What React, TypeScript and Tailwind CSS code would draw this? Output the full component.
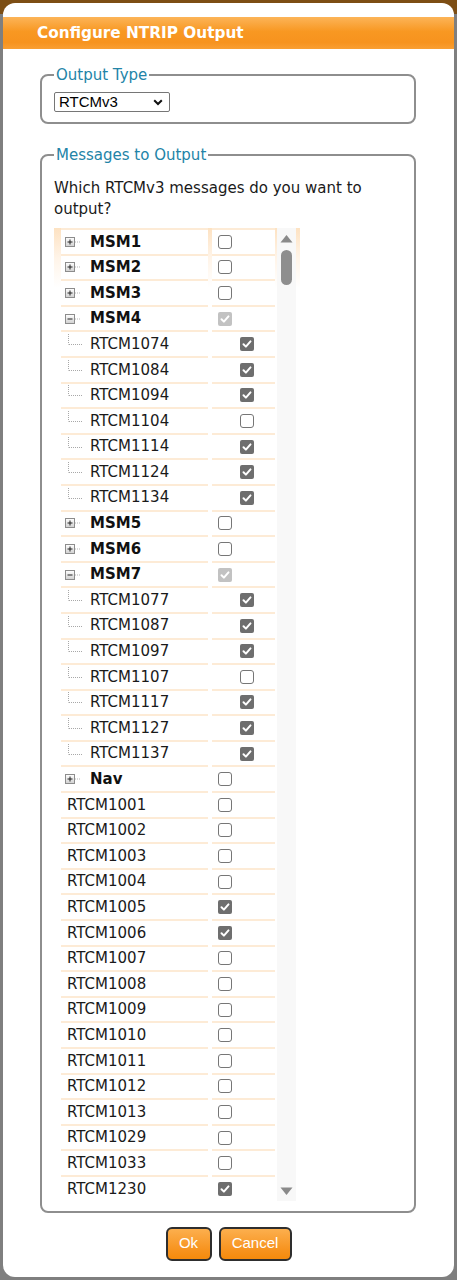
import React from "react";

type Row =
  | { kind: "group"; label: string; expanded: boolean; state: "off" | "on" | "dis" }
  | { kind: "child"; label: string; state: "off" | "on" }
  | { kind: "top"; label: string; state: "off" | "on" };

const rows: Row[] = [];
const grp = (label: string, expanded: boolean, state: "off" | "on" | "dis") =>
  rows.push({ kind: "group", label, expanded, state });
const kids = (ids: [string, boolean][]) =>
  ids.forEach(([l, c]) => rows.push({ kind: "child", label: l, state: c ? "on" : "off" }));

grp("MSM1", false, "off");
grp("MSM2", false, "off");
grp("MSM3", false, "off");
grp("MSM4", true, "dis");
kids([
  ["RTCM1074", true],
  ["RTCM1084", true],
  ["RTCM1094", true],
  ["RTCM1104", false],
  ["RTCM1114", true],
  ["RTCM1124", true],
  ["RTCM1134", true],
]);
grp("MSM5", false, "off");
grp("MSM6", false, "off");
grp("MSM7", true, "dis");
kids([
  ["RTCM1077", true],
  ["RTCM1087", true],
  ["RTCM1097", true],
  ["RTCM1107", false],
  ["RTCM1117", true],
  ["RTCM1127", true],
  ["RTCM1137", true],
]);
grp("Nav", false, "off");
[
  ["RTCM1001", false],
  ["RTCM1002", false],
  ["RTCM1003", false],
  ["RTCM1004", false],
  ["RTCM1005", true],
  ["RTCM1006", true],
  ["RTCM1007", false],
  ["RTCM1008", false],
  ["RTCM1009", false],
  ["RTCM1010", false],
  ["RTCM1011", false],
  ["RTCM1012", false],
  ["RTCM1013", false],
  ["RTCM1029", false],
  ["RTCM1033", false],
  ["RTCM1230", true],
].forEach(([l, c]) => rows.push({ kind: "top", label: l as string, state: c ? "on" : "off" }));

function Check({ state }: { state: "off" | "on" | "dis" }) {
  if (state === "off") {
    return <span className="block w-[14px] h-[14px] rounded-[3px] border border-[#767676] bg-white" />;
  }
  return (
    <span
      className={
        "flex items-center justify-center w-[14px] h-[14px] rounded-[2px] " +
        (state === "on" ? "bg-[#6e6e6e]" : "bg-[#c2c2c2]")
      }
    >
      <svg width="12" height="12" viewBox="0 0 12 12">
        <path d="M2.5 6.3 L4.9 8.6 L9.5 3.4" fill="none" stroke="#fff" strokeWidth="2" strokeLinecap="round" strokeLinejoin="round" />
      </svg>
    </span>
  );
}

function Expander({ expanded }: { expanded: boolean }) {
  return (
    <span className="flex items-center">
      <svg width="15" height="10" viewBox="0 0 15 10">
        <defs>
          <linearGradient id="eg" x1="0" y1="0" x2="0" y2="1">
            <stop offset="0" stopColor="#ffffff" />
            <stop offset="1" stopColor="#d0d0d0" />
          </linearGradient>
        </defs>
        <rect x="0.5" y="0.5" width="9" height="9" fill="url(#eg)" stroke="#8c8c8c" />
        <line x1="2.5" y1="5" x2="7.5" y2="5" stroke="#222" />
        {!expanded && <line x1="5" y1="2.5" x2="5" y2="7.5" stroke="#222" />}
        <line x1="10" y1="5" x2="15" y2="5" stroke="#b5b5b5" strokeDasharray="1 1" />
      </svg>
    </span>
  );
}

function Connector() {
  return (
    <svg width="22" height="22" viewBox="0 0 22 22" className="shrink-0">
      <line x1="7.5" y1="1" x2="7.5" y2="11.5" stroke="#a8a8a8" strokeDasharray="1 1" />
      <line x1="8" y1="11.5" x2="21" y2="11.5" stroke="#a8a8a8" strokeDasharray="1 1" />
    </svg>
  );
}

function TreeRow({ row }: { row: Row }) {
  const cell = "bg-white border-t-2 border-[#fdebd6] flex items-center h-[25.6px]";
  return (
    <div className="grid grid-cols-[147px_63px] gap-x-[4px]">
      <div className={cell}>
        {row.kind === "group" && (
          <div className="flex items-center pl-[4px]">
            <Expander expanded={row.expanded} />
            <span className="ml-[10px] font-bold text-[15px] text-[#111]">{row.label}</span>
          </div>
        )}
        {row.kind === "child" && (
          <div className="flex items-center">
            <Connector />
            <span className="ml-[7px] text-[15px] text-[#1a1a1a]">{row.label}</span>
          </div>
        )}
        {row.kind === "top" && <span className="pl-[6px] text-[15px] text-[#1a1a1a]">{row.label}</span>}
      </div>
      <div className={cell + (row.kind === "child" ? " pl-[28px]" : " pl-[6px]")}>
        <Check state={row.state} />
      </div>
    </div>
  );
}

export default function App() {
  return (
    <div
      className="w-[457px] h-[1280px] pt-[3px] pl-[3px] bg-[linear-gradient(to_bottom,#7d4e14_0px,#7d4e14_14px,#7f7f7f_14px)]"
      style={{ fontFamily: '"DejaVu Sans", Verdana, sans-serif' }}
    >
      <div className="w-[451px] h-[1274px] bg-white rounded-[12px] pt-[14px] pb-[16px] flex flex-col">
        <div className="h-[32px] flex items-center pl-[34px] bg-[linear-gradient(to_bottom,#fcb458_0%,#f89822_45%,#f7931e_80%,#f99f33_100%)]">
          <span className="text-white font-bold text-[15.3px]">Configure NTRIP Output</span>
        </div>

        <fieldset className="mt-[17px] ml-[37px] mr-[38px] border-2 border-[#8e8e8e] rounded-[8px] px-[12px] pt-[8px] pb-[10px]">
          <legend className="px-[2px] text-[15px] leading-[18px] text-[#2384a7]">Output Type</legend>
          <div className="relative w-[116px] h-[20px] border border-[#767676] rounded-[2px] bg-white flex items-center">
            <span className="pl-[4px] text-[15px] text-black" style={{ fontFamily: '"Liberation Sans", Arial, sans-serif' }}>
              RTCMv3
            </span>
            <svg className="absolute right-[6px] top-[6px]" width="10" height="7" viewBox="0 0 10 7">
              <path d="M1.2 1.2 L5 5 L8.8 1.2" fill="none" stroke="#111" strokeWidth="2" />
            </svg>
          </div>
        </fieldset>

        <fieldset className="mt-[22px] ml-[37px] mr-[38px] border-2 border-[#8e8e8e] rounded-[8px] px-[12px] pt-[14px] pb-[10px]">
          <legend className="px-[2px] text-[15px] leading-[18px] text-[#2384a7]">Messages to Output</legend>
          <p className="text-[15px] leading-[21px] text-[#1a1a1a]">Which RTCMv3 messages do you want to output?</p>
          <div className="mt-[8px] w-[246px] flex pl-[7px] pr-[4px] bg-[linear-gradient(to_bottom,#fde2c2_0px,#fff4e8_30px,#ffffff_60px)]">
            <div className="w-[214px] flex flex-col">
              {rows.map((r, i) => (
                <TreeRow key={i} row={r} />
              ))}
            </div>
            <div className="ml-[2px] w-[19px] bg-[#f8f8f8] flex flex-col items-center justify-between pt-[6px] pb-[5px]">
              <div className="flex flex-col items-center">
                <svg width="13" height="9" viewBox="0 0 13 9">
                  <path d="M0.5 8.5 L6.5 1 L12.5 8.5 Z" fill="#8a8a8a" />
                </svg>
                <div className="mt-[7px] w-[11px] h-[35px] rounded-full bg-[#8e8e8e]" />
              </div>
              <svg width="13" height="9" viewBox="0 0 13 9">
                <path d="M0.5 0.5 L6.5 8 L12.5 0.5 Z" fill="#8a8a8a" />
              </svg>
            </div>
          </div>
        </fieldset>

        <div className="mt-[14px] flex justify-center gap-[7px]" style={{ fontFamily: '"Liberation Sans", Arial, sans-serif' }}>
          <button className="w-[46px] h-[34px] rounded-[6px] border-2 border-[#2e2e2e] text-white text-[15px] bg-[linear-gradient(to_bottom,#fcaf4e,#f7931e_70%,#f58a0c)]">
            Ok
          </button>
          <button className="w-[73px] h-[34px] rounded-[6px] border-2 border-[#2e2e2e] text-white text-[15px] bg-[linear-gradient(to_bottom,#fcaf4e,#f7931e_70%,#f58a0c)]">
            Cancel
          </button>
        </div>
      </div>
    </div>
  );
}
